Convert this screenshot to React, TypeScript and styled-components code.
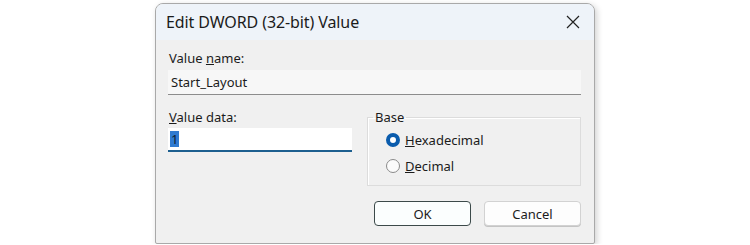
import styled, { createGlobalStyle } from "styled-components";

const GlobalStyle = createGlobalStyle`
	body {
		margin: 0;
		background: #ffffff;
		font-family: "Segoe UI", "Noto Sans", "Liberation Sans", sans-serif;
		color: #1b1b1b;
	}
`;

const Page = styled.div`
	display: flex;
	padding: 3px 0 0 155px;
`;

const Dialog = styled.div`
	display: flex;
	flex-direction: column;
	width: 438px;
	height: 239px;
	border: 1px solid #a9a9a9;
	border-radius: 8px 8px 2px 2px;
	background: #f0f0f0;
	box-shadow: 2px 2px 6px rgba(0, 0, 0, 0.18);
	overflow: hidden;
`;

const TitleBar = styled.div`
	display: flex;
	align-items: center;
	justify-content: space-between;
	height: 36px;
	padding: 0 14px 0 10px;
	background: #eef3f9;
	font-size: 16px;
	letter-spacing: -0.1px;
`;

const Close = styled.svg`
	width: 14px;
	height: 14px;
`;

const Body = styled.div`
	display: flex;
	flex-direction: column;
	padding: 10px 13px 0 12px;
	font-size: 13px;
`;

const Label = styled.div`
	height: 16px;
	line-height: 16px;
	margin-left: 1px;
`;

const NameInput = styled.div`
	height: 24px;
	margin-top: 4px;
	padding-left: 3px;
	line-height: 24px;
	background: #f7f7f7;
	border-bottom: 1px solid #8c8c8c;
`;

const Columns = styled.div`
	display: grid;
	grid-template-columns: 184px 1fr;
	gap: 15px;
	margin-top: 14px;
`;

const DataInput = styled.div`
	display: flex;
	align-items: center;
	height: 22px;
	margin-top: 3px;
	padding-left: 2px;
	background: #ffffff;
	border-bottom: 2px solid #1d5f8f;
`;

const Selected = styled.span`
	padding: 0 1px;
	line-height: 16px;
	background: #2f7ad0;
	color: #0c1c30;
`;

const Group = styled.fieldset`
	display: flex;
	flex-direction: column;
	gap: 10px;
	margin: 0;
	height: 77px;
	padding: 7px 0 0 18px;
	border: 1px solid #dcdcdc;
	box-shadow: inset 1px 1px 0 #ffffff;
	border-radius: 0;
	box-sizing: border-box;
	legend {
		padding: 0 2px;
		margin-left: -13px;
		line-height: 16px;
	}
`;

const Radio = styled.label`
	display: flex;
	align-items: center;
	gap: 5px;
	line-height: 16px;
`;

const Dot = styled.span<{ checked?: boolean }>`
	width: 14px;
	height: 14px;
	box-sizing: border-box;
	border-radius: 50%;
	border: ${(p) => (p.checked ? "4px solid #0a5cad" : "1px solid #8a8a8a")};
	background: ${(p) => (p.checked ? "#ffffff" : "#fbfbfb")};
`;

const Buttons = styled.div`
	display: flex;
	justify-content: flex-end;
	gap: 13px;
	margin-top: 15px;
`;

const Button = styled.button<{ primary?: boolean }>`
	width: 97px;
	height: 25px;
	font-family: inherit;
	font-size: 13px;
	color: #1b1b1b;
	border-radius: 4px;
	border: 1px solid ${(p) => (p.primary ? "#3c4a4a" : "#d2d2d2")};
	background: ${(p) => (p.primary ? "#fbfefe" : "#fdfdfd")};
	box-shadow: ${(p) => (p.primary ? "none" : "0 1px 0 #c4c4c4")};
`;

function App() {
	return (
		<>
			<GlobalStyle />
			<Page>
				<Dialog>
					<TitleBar>
						<span>Edit DWORD (32-bit) Value</span>
						<Close viewBox="0 0 14 14">
							<path d="M1 1 L13 13 M13 1 L1 13" stroke="#222" strokeWidth="1.2" />
						</Close>
					</TitleBar>
					<Body>
						<Label>
							Value <u>n</u>ame:
						</Label>
						<NameInput>Start_Layout</NameInput>
						<Columns>
							<div>
								<Label>
									<u>V</u>alue data:
								</Label>
								<DataInput>
									<Selected>1</Selected>
								</DataInput>
							</div>
							<Group>
								<legend>Base</legend>
								<Radio>
									<Dot checked />
									<span>
										<u>H</u>exadecimal
									</span>
								</Radio>
								<Radio>
									<Dot />
									<span>
										<u>D</u>ecimal
									</span>
								</Radio>
							</Group>
						</Columns>
						<Buttons>
							<Button primary>OK</Button>
							<Button>Cancel</Button>
						</Buttons>
					</Body>
				</Dialog>
			</Page>
		</>
	);
}

export default App;
